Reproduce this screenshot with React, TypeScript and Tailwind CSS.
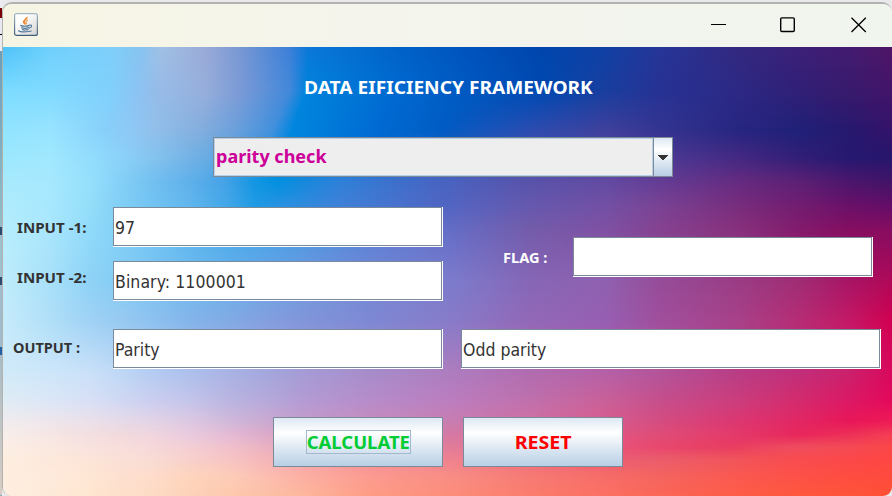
import React from "react";

type Row = [y: number, stops: string];

// Wallpaper mesh: every row lists eighteen "x:colour" knots; both are interpolated between rows.
const MESH: Row[] = [
  [47, "3:4fc3f8 50:6fd0fb 110:7dcffa 142:88c3f0 162:a0c0e4 205:9aaad8 240:7898d3 290:3c7fd8 308:0a78d8 400:0062c8 470:0052bc 545:0045ac 605:103fa4 660:263597 740:33287f 800:3c2078 850:421b70 892:4f1466"],
  [90, "3:7cdcff 50:80daff 110:80d0fc 135:8ac4f4 160:97bbe8 205:96aedb 240:7b9ad6 290:4288da 306:0083dc 400:0068d0 470:0058c0 545:0048b0 605:183e9e 660:263294 740:2c2884 800:301f76 850:381a6c 892:42146a"],
  [130, "3:92e4ff 50:98e4ff 105:88d0fb 130:8ec8f6 155:90bfea 200:82aede 235:6ba0dc 272:4290dc 292:0086de 370:006cd4 440:005cc4 530:2c4cb0 605:40409c 660:343490 740:262580 800:202078 850:26186e 892:34126a"],
  [157, "3:9ce8fe 50:a0e8fe 98:90dafc 125:8ad0f8 152:84c4ef 195:70b0e4 230:58a4e2 265:2a94e0 284:008ade 350:0074d8 430:2c62c8 530:4c50b0 605:5046a0 660:4c3a94 740:442882 800:321e76 850:261870 892:26166c"],
  [180, "3:a8e9fd 50:a6e8fe 90:95dffc 120:84d0f8 150:74c1f1 190:5fb0ea 225:45a2e6 255:1296e2 275:0090e0 340:2f80d8 430:4566c4 530:5852aa 605:624aa2 660:633c94 740:642a80 800:5a2074 850:4a166c 892:401468"],
  [205, "3:b0ecfd 50:a8e8fe 90:94def9 120:82cff6 150:72c4f2 190:60b6ee 230:3fa6e8 255:1e9ae4 285:2a90e0 340:3e80d8 440:5066c4 530:6658ae 605:7250a4 660:7a4294 740:782c7c 800:721c70 850:6a1068 892:640c68"],
  [230, "3:b6edfd 50:a9e6fc 90:90dafa 120:82d0f6 150:74c6f3 190:5eb6ee 230:4aaae9 265:48a2e8 300:4c98e2 370:5880d6 445:646ec8 530:745caa 605:8050a4 660:854290 740:88307c 800:841a6c 850:860e60 892:880c60"],
  [280, "3:bfecfb 50:a8e0f9 90:8ed2f6 120:84ccf4 150:7cc4f2 190:6ebaee 230:68b0ea 265:68a6e6 300:6c9cdf 370:7488d4 455:7c7acb 530:8666b6 605:9060b0 660:964c98 740:9a3c84 800:a02c74 850:a81464 892:b00858"],
  [320, "3:c6ebfb 50:b0dff8 90:9fd2f5 120:98caf2 150:8ec2f0 190:84b4ea 230:82aae4 265:849fdf 300:8296da 370:7e88d4 455:887ac8 530:9268b8 605:965eb2 660:a04e9c 740:a84088 800:b62c74 850:c41866 892:d20050"],
  [370, "3:d0eaf8 50:cce6fa 90:c8e0f8 120:bed8f6 150:b4cdf2 190:acbfec 230:a8b2e4 270:a2a6dc 300:a49cd6 370:a68cca 455:ac7cbe 530:b06cb0 605:b460a8 660:b2549a 740:b83c84 800:c02e7a 850:ca206c 892:d8085c"],
  [400, "3:e0ecf4 50:dce6f6 90:d8e0f6 120:d0d8f2 150:cccef0 190:c4c4ea 230:bab4e0 270:b6a8da 300:b49cd4 370:b68cca 455:bc7cbe 530:c070ac 605:ca6098 660:c64e8c 740:cc3c7c 800:d42a6c 850:dc1864 892:e4085a"],
  [420, "3:f0ecee 50:eee6ec 90:eae0ea 120:e6dae8 150:e2d4e6 190:dcc8e2 230:d0b8da 270:caa8d0 300:c49ccc 370:c48cbe 455:c87cb0 530:ce70a4 605:d65c90 660:d44c80 740:dc3670 800:e22664 850:e81658 892:ee1a56"],
  [434, "3:f8eeea 50:f6e6e4 90:f4dfe0 120:f2dadc 150:f0d6de 190:eacade 230:e4bad4 270:dca8c8 300:d69ec0 370:d088b0 455:d678a2 530:da6c9a 605:e05886 660:e04c76 740:e4386a 800:e8265a 846:ec3058 892:f43e54"],
  [446, "3:fceee4 50:fae8e0 90:f8e2de 120:f8dedc 150:f6d8da 190:f2ced4 230:f0c0cc 270:e8b0c0 300:e4a4b8 370:e08ca8 455:e27a98 530:e66c8c 605:ea547c 660:e8466c 730:e83c60 790:ee4c60 850:f44a54 892:fa4648"],
  [458, "3:fdeee0 50:fde8dc 90:fce4d8 120:fae0d6 150:f8dcd4 190:f8d0cc 230:f6c4c4 270:f4b4b8 300:f2a8b0 370:f09098 455:ee8090 530:ee6c80 605:ec5c74 660:ea5c6c 730:f0545c 790:f84c50 850:fc484a 892:fe4642"],
  [475, "3:feeee0 50:feeadc 90:fee6d4 120:fee0d0 150:fedccc 190:fed4bc 230:fdccb8 270:fcbcb0 300:fcb0a4 370:fc9a90 455:f88c84 530:f67a74 605:f66c68 660:f46460 740:fa5850 800:fd5048 850:fe4c40 892:fe4a3e"],
  [496, "3:feeee0 50:feead8 90:fee6d0 120:fee0ca 150:fddcc4 190:fdd2b8 230:fdc8ac 270:fcc0a4 300:fdb89c 370:fe9c84 455:fd8c78 530:fc7c6c 605:fc7062 660:fc6656 740:fe5c46 800:fe583c 850:fe5438 892:fe5034"],
];

type Knot = { x: number; c: number[] };
const ROWS = MESH.map(([y, s]) => ({
  y,
  knots: s.split(" ").map((k): Knot => {
    const [x, hex] = k.split(":");
    return { x: +x, c: [0, 2, 4].map((i) => parseInt(hex.slice(i, i + 2), 16)) };
  }),
}));

const STEP = 2;
const LINES = Array.from({ length: 225 }, (_, n) => {
  const y = 47 + n * STEP;
  let i = 0;
  while (i < ROWS.length - 2 && ROWS[i + 1].y <= y) i++;
  const a = ROWS[i];
  const b = ROWS[i + 1];
  const t = Math.min(1, (y - a.y) / (b.y - a.y));
  return a.knots.map((k, j) => {
    const q = b.knots[j];
    return {
      x: k.x + (q.x - k.x) * t,
      color: `rgb(${k.c.map((v, m) => Math.round(v + (q.c[m] - v) * t)).join(",")})`,
    };
  });
});

function Wallpaper() {
  return (
    <svg className="absolute inset-0 h-full w-full" viewBox="3 47 889 449" preserveAspectRatio="none" shapeRendering="crispEdges">
      <defs>
        {LINES.map((l, n) => (
          <linearGradient key={n} id={`w${n}`} gradientUnits="userSpaceOnUse" x1="0" x2="892" y1="0" y2="0">
            {l.map((s, j) => (
              <stop key={j} offset={s.x / 892} stopColor={s.color} />
            ))}
          </linearGradient>
        ))}
      </defs>
      {LINES.map((_, n) => (
        <rect key={n} x="3" y={47 + n * STEP} width="889" height={STEP} fill={`url(#w${n})`} />
      ))}
    </svg>
  );
}

const BOLD = "font-['Noto_Sans',sans-serif] font-bold whitespace-pre";
const REGULAR = "font-['DejaVu_Sans_Condensed','DejaVu_Sans',sans-serif] [font-stretch:condensed] whitespace-pre";

function Field({ text = "", box, track = "" }: { text?: string; box: string; track?: string }) {
  return (
    <div className={`h-10 shrink-0 border-r border-b border-white ${box}`}>
      <div className={`flex h-full items-center border border-[#7a8a99] bg-white pt-0.5 pl-px text-[17.5px] leading-5 text-[#333] ${REGULAR}`}>
        <span className={track}>{text}</span>
      </div>
    </div>
  );
}

function Label({ children, className, stretch }: { children: React.ReactNode; className: string; stretch: string }) {
  return (
    <div className={`text-[13.5px] leading-4 ${BOLD} ${className}`}>
      <span className={`inline-block origin-left ${stretch}`}>{children}</span>
    </div>
  );
}

function JavaIcon() {
  return (
    <svg width="24" height="23" viewBox="0 0 24 23" fill="none">
      <defs>
        <linearGradient id="tile" x1="0" y1="0" x2="1" y2="1">
          <stop offset="0.3" stopColor="#fff" />
          <stop offset="1" stopColor="#d2d2d2" />
        </linearGradient>
        <linearGradient id="rim" x1="0" y1="0" x2="0" y2="1">
          <stop offset="0" stopColor="#a4b8c8" />
          <stop offset="1" stopColor="#3f6078" />
        </linearGradient>
      </defs>
      <rect x="0.6" y="0.6" width="22.8" height="21.8" rx="2" fill="url(#tile)" stroke="url(#rim)" strokeWidth="1.2" />
      <path d="M12.8 4c1 2-4 3.200-3 5.200.4 1 1.200 1.300 1.400 2.300" stroke="#e98430" strokeWidth="1.8" />
      <path d="M14 7c-2 .8-2.600 1.800-1.800 2.600.5.7.3 1.200-.2 1.700" stroke="#f0a050" strokeWidth="1.200" />
      <path d="M6.300 12.400c2 .8 7 .8 9.500 0M7.300 14.600c2 .8 5.500.8 7.800 0M8 16.500c2 .6 4.500.6 6.500 0" stroke="#54799a" strokeWidth="1.200" />
      <path d="M15.300 12.200c3-1 3.200 2-.3 3" stroke="#54799a" strokeWidth="1.100" />
      <path d="M5.500 17.400c-3 1 3 1.700 7 1.400 3-.2 5-.6 4.800-1.300" stroke="#54799a" strokeWidth="1.100" />
    </svg>
  );
}

export default function App() {
  return (
    <div className="relative flex h-[496px] w-[892px] overflow-hidden bg-[#e9e9eb]">
      {/* sliver of the window behind, visible along the left edge */}
      <div className="flex w-[2px] shrink-0 flex-col bg-[#7fb0c4]">
        <div className="h-2 bg-[#ececf0]" />
        <div className="h-[10px] bg-[#7a0008]" />
        <div className="h-4 bg-[#e8e8ee]" />
        <div className="h-px bg-black" />
        <div className="h-4 bg-[#ececf2]" />
        <div className="h-[176px] bg-gradient-to-b from-[#6a9fba] to-[#94bcc8]" />
        <div className="h-2 bg-[#2d4b70]" />
        <div className="h-[42px] bg-[#9cc0cc]" />
        <div className="h-2 bg-[#2d4b70]" />
        <div className="h-[62px] bg-[#a0bccc]" />
        <div className="h-2 bg-[#2460a8]" />
        <div className="h-[140px] bg-gradient-to-b from-[#a8bcc6] to-[#d8ccc2]" />
      </div>

      <div className="mt-[2px] flex w-[890px] shrink-0 flex-col overflow-hidden rounded-t-[10px] rounded-b-[9px] border-t-2 border-l border-[#b2b3b1]">
        <header className="flex h-[43px] shrink-0 items-center bg-gradient-to-r from-[#f6f5e4] via-[#f4f4ec] via-40% to-[#f0f5ee] pl-[11px]">
          <div className="-mt-[3px]">
            <JavaIcon />
          </div>
          <svg className="mt-[-2px] mr-[25px] ml-auto" width="156" height="16" viewBox="0 0 156 16" fill="none" stroke="#000">
            <path d="M0 7.500h15" shapeRendering="crispEdges" />
            <rect x="69.700" y="0.900" width="13.600" height="13.600" rx="1.200" strokeWidth="1.400" />
            <path d="M140.500 0.700l14.300 14.300M154.800 0.700l-14.300 14.300" strokeWidth="1.300" />
          </svg>
        </header>

        <main className="relative h-[449px] shrink-0">
          <Wallpaper />
          <div className="relative flex h-full flex-col">
            <h1 className={`mt-[30px] ml-[301px] h-5 text-[18px] leading-5 text-white ${BOLD}`}>
              <span className="inline-block origin-left scale-x-[1.064]">DATA EIFICIENCY FRAMEWORK</span>
            </h1>

            <div className="mt-10 ml-[210px] flex h-10 w-[460px] border border-[#7a8a99]">
              <div className={`flex flex-1 items-center border border-[#b8cfe5] bg-[#eee] pb-0.5 pl-px text-[18px] leading-5 text-[#cc0099] ${BOLD}`}>
                <span>parity check</span>
              </div>
              <div className="flex w-[19px] items-center justify-center border-l border-[#7a8a99] bg-linear-[180deg,#dde8f3_0%,#fff_30%,#b8cfe5_100%]">
                <svg width="10" height="5" viewBox="0 0 10 5" fill="#333" shapeRendering="crispEdges">
                  <path d="M0 0h10v1h-1v1h-1v1h-1v1h-1v1h-2v-1h-1v-1h-1v-1h-1v-1h-1z" />
                </svg>
              </div>
            </div>

            <div className="mt-[30px] flex h-[94px]">
              <div className="flex w-[110px] flex-col pl-[14px] text-[#333]">
                <Label className="mt-[13px]" stretch="scale-x-[1.12]">INPUT -1:</Label>
                <Label className="mt-[34px]" stretch="scale-x-[1.12]">INPUT -2:</Label>
              </div>
              <div className="flex flex-col gap-[14px]">
                <Field box="w-[330px]" text="97" />
                <Field box="w-[330px]" text="Binary: 1100001" track="tracking-[0.08px]" />
              </div>
              <Label className="mt-[43px] ml-[60px] w-[70px] text-white" stretch="scale-x-[1.08]">FLAG :</Label>
              <div className="mt-[30px]">
                <Field box="w-[300px]" />
              </div>
            </div>

            <div className="mt-7 flex h-10">
              <Label className="mt-[11px] w-[110px] pl-[10px] text-[#333]" stretch="scale-x-[1.075]">OUTPUT :</Label>
              <Field box="w-[330px]" text="Parity" />
              <Field box="ml-[18px] w-[420px]" text="Odd parity" />
            </div>

            <div className="mt-12 ml-[270px] flex gap-5">
              <button className={`flex h-[50px] w-[170px] items-center justify-center border border-[#7a8a99] bg-linear-[180deg,#dde8f3_0%,#fff_30%,#b8cfe5_100%] text-[18px] leading-5 text-[#00cc33] ${BOLD}`}>
                <span className="flex h-6 w-[105px] items-center justify-center border border-[#a3b8cc]">
                  <span className="inline-block scale-x-[1.025]">CALCULATE</span>
                </span>
              </button>
              <button className={`flex h-[50px] w-[160px] items-center justify-center border border-[#7a8a99] bg-linear-[180deg,#dde8f3_0%,#fff_30%,#b8cfe5_100%] text-[18px] leading-5 text-[#ff0000] ${BOLD}`}>
                <span className="inline-block scale-x-[1.09] pl-px">RESET</span>
              </button>
            </div>
          </div>
        </main>
      </div>
    </div>
  );
}
